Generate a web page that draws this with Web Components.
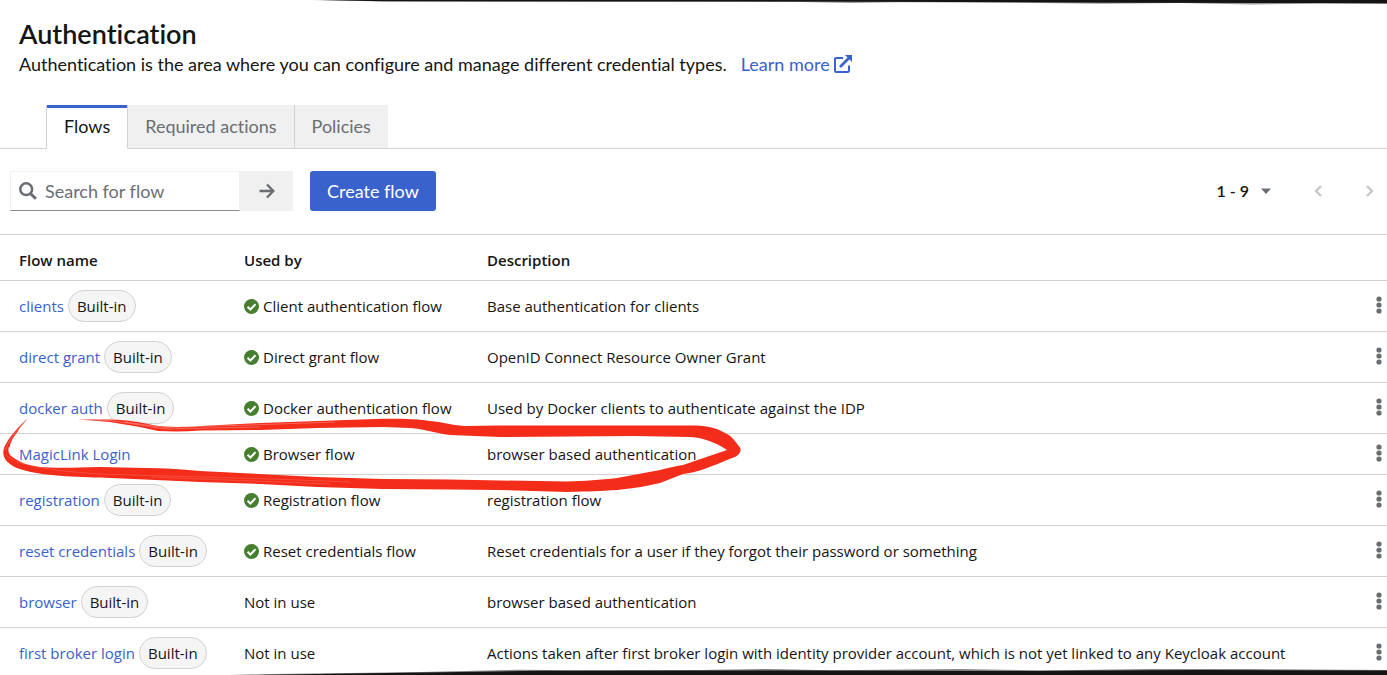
<!DOCTYPE html>
<html lang="en">
<head>
<meta charset="utf-8">
<title>Authentication</title>
<style>
  body { margin: 0; background: #fff; color: #151515; font-family: Lato, "Liberation Sans", sans-serif; font-size: 16px; line-height: 24px; font-variant-ligatures: none; }
</style>
</head>
<body>
<auth-page></auth-page>

<template id="t-auth-page">
  <style>
    :host { display: block; position: relative; height: 100vh; overflow: hidden; }
    torn-edge { position: absolute; left: 0; right: 0; }
    torn-edge[side="top"] { top: 0; }
    torn-edge[side="bottom"] { bottom: 0; }
  </style>
  <main>
    <page-heading>
      <span slot="title">Authentication</span>
      <span slot="text">Authentication is the area where you can configure and manage different credential types.</span>
    </page-heading>
    <flow-tabs></flow-tabs>
    <flow-toolbar></flow-toolbar>
    <flow-table></flow-table>
  </main>
  <torn-edge side="top"></torn-edge>
  <torn-edge side="bottom"></torn-edge>
</template>

<template id="t-page-heading">
  <style>
    :host { display: block; padding: 18px 19px 0; }
    h1 { margin: 0; font-size: 27px; line-height: 32px; font-weight: 600; }
    p { margin: 0; font-size: 18px; line-height: 28px; display: flex; flex-wrap: wrap; column-gap: 14px; }
    a { color: #3a62cc; text-decoration: none; display: inline-flex; align-items: center; gap: 4px; }
    svg { width: 18px; height: 18px; display: block; }
  </style>
  <h1><slot name="title"></slot></h1>
  <p><slot name="text"></slot>
    <a href="#learn">Learn more
      <svg viewBox="0 0 18 18" fill="none" stroke="currentColor" stroke-width="2"><path d="M9 3H2.200Q1 3 1 4.200V15.800Q1 17 2.200 17H13.800Q15 17 15 15.800V10.500"/><path d="M6 12L15 3" stroke-width="2.600"/><path d="M11 0H18V7Z" fill="currentColor" stroke="none"/></svg>
    </a>
  </p>
</template>

<template id="t-flow-tabs">
  <style>
    :host { display: block; margin-top: 27px; padding-left: 46px; box-shadow: inset 0 -1px #d2d2d2; }
    div { display: flex; }
    button { font: inherit; font-size: 18px; line-height: 24px; color: #6a6e73; background: #f0f0f0; border: 0; border-right: 1px solid #d2d2d2; border-bottom: 1px solid #d2d2d2; margin: 0; padding: 9px 17px 10px; height: 44px; }
    button:last-child { border-right: 0; }
    button[aria-selected="true"] { background: #fff; color: #151515; border-left: 1px solid #d2d2d2; border-bottom-color: #fff; box-shadow: inset 0 3px #3a62cc; }
  </style>
  <div role="tablist">
    <button role="tab" aria-selected="true">Flows</button>
    <button role="tab" aria-selected="false">Required actions</button>
    <button role="tab" aria-selected="false">Policies</button>
  </div>
</template>

<template id="t-flow-toolbar">
  <style>
    :host { display: flex; align-items: center; padding: 22px 0 23px 10px; }
    form { display: flex; margin-right: 17px; }
    label { display: flex; align-items: center; gap: 8px; box-sizing: border-box; width: 230px; height: 40px; padding-left: 8px; border: 1px solid #f0f0f0; border-bottom-color: #8a8d90; color: #6a6e73; }
    label svg { width: 18px; height: 18px; flex: none; }
    input { font: inherit; font-size: 18px; line-height: 24px; border: 0; padding: 0; margin: 0; min-width: 0; flex: 1; background: none; outline: 0; color: #151515; }
    input::placeholder { color: #6a6e73; opacity: 1; }
    button { font: inherit; border: 0; margin: 0; padding: 0; background: none; color: #6a6e73; display: flex; align-items: center; justify-content: center; }
    .go { width: 53px; height: 40px; background: #f0f0f0; }
    .create { height: 40px; padding: 0 17px; border-radius: 3px; background: #3a62cc; color: #fff; font-size: 18px; line-height: 24px; }
    .pager { margin-left: auto; display: flex; align-items: center; }
    .range { gap: 12px; color: #151515; font-size: 16px; font-weight: 600; margin-right: 43px; }
    .step { color: #c8c8c8; }
    .prev { margin-right: 44px; }
    .next { margin-right: 13px; }
  </style>
  <form role="search" onsubmit="return false">
    <label>
      <svg viewBox="0 0 18 18" fill="none" stroke="currentColor"><circle cx="7.200" cy="7.200" r="5.900" stroke-width="2.500"/><path d="M11.500 11.500L16.800 16.800" stroke-width="3"/></svg>
      <input type="text" placeholder="Search for flow" aria-label="Search for flow">
    </label>
    <button class="go" aria-label="Search"><svg width="16" height="16" viewBox="0 0 16 16" fill="none" stroke="currentColor" stroke-width="2.400"><path d="M.5 8H14M8 1.500L14.300 8L8 14.500"/></svg></button>
  </form>
  <button class="create">Create flow</button>
  <div class="pager">
    <button class="range">1 - 9 <svg width="10" height="6" viewBox="0 0 10 6"><path d="M0 .5H10L5 6Z" fill="#6a6e73"/></svg></button>
    <button class="step prev" aria-label="Previous"><svg width="8" height="12" viewBox="0 0 8 12" fill="none" stroke="currentColor" stroke-width="2.400"><path d="M7 1L2 6L7 11"/></svg></button>
    <button class="step next" aria-label="Next"><svg width="8" height="12" viewBox="0 0 8 12" fill="none" stroke="currentColor" stroke-width="2.400"><path d="M1 1L6 6L1 11"/></svg></button>
  </div>
</template>

<template id="t-flow-table">
  <style>
    :host { display: block; position: relative; border-top: 1px solid #d2d2d2; }
    table { width: 100%; border-collapse: collapse; table-layout: fixed; font-family: "Open Sans", "Liberation Sans", sans-serif; font-size: 15px; line-height: 24px; }
    th, td { padding: 0; text-align: left; font-weight: 400; border-bottom: 1px solid #d2d2d2; vertical-align: middle; white-space: nowrap; height: 40px; }
    th { height: 37px; padding-bottom: 8px; font-weight: 600; vertical-align: bottom; }
    tr.tall td { height: 50px; }
    th:first-child, td:first-child { padding-left: 19px; }
    .name { width: 225px; }
    .used { width: 243px; }
    .menu { width: 16px; }
    td > div { display: flex; align-items: center; gap: 4px; }
    a { color: #3a62cc; text-decoration: none; }
    red-marker { position: absolute; left: 0; top: 183px; pointer-events: none; }
  </style>
  <table>
    <thead><tr><th class="name">Flow name</th><th class="used">Used by</th><th>Description</th><th class="menu" aria-label="Actions"></th></tr></thead>
    <tbody></tbody>
  </table>
  <red-marker></red-marker>
</template>

<template id="t-built-in">
  <style>
    :host { display: block; box-sizing: border-box; height: 32px; padding: 3px 8px; border: 1px solid #d2d2d2; border-radius: 16px; background: #f5f5f5; }
  </style>
  <slot></slot>
</template>

<template id="t-used-by">
  <style>
    :host { display: flex; align-items: center; gap: 4px; }
    svg { width: 15px; height: 15px; flex: none; }
  </style>
  <svg viewBox="0 0 16 16" aria-hidden="true"><circle cx="8" cy="8" r="8" fill="#467f2f"/><path d="M3.800 8.300L6.800 11.200L12.300 5.500" fill="none" stroke="#fff" stroke-width="2.200"/></svg>
  <slot></slot>
</template>

<template id="t-row-menu">
  <style>
    :host { display: block; }
    button { display: flex; justify-content: center; width: 16px; margin: 0; padding: 0; border: 0; background: none; }
  </style>
  <button aria-label="Row actions"><svg width="6" height="20" viewBox="0 0 6 20" fill="#6a6e73"><circle cx="3" cy="3" r="2.600"/><circle cx="3" cy="9" r="2.600"/><circle cx="3" cy="15" r="2.600"/></svg></button>
</template>

<template id="t-red-marker">
  <style>:host { display: block; } svg { display: block; }</style>
  <svg width="744" height="78" viewBox="0 418 744 78" fill="#f42c1a" aria-hidden="true">
    <path d="M28 418C20 425 6 440 3.500 450C2 458 8 465 20 469C36 475 70 477 100 477.500L200 482L260 484L317 487L383 489L450 489.500L500 490L567 492C590 491.500 600 491 617 490C635 488 648 486 660 483L683 474C697 473 715 465 727 460L736 456.500Q743 451 739.500 447C735 441 732 436 725 433C715 427 705 425.500 690 425.500H500L465 426C450 425 443 422 430 421C420 419 400 418.500 383 418.700L317 421L250 423.500L200 426C180 427.500 165 427 155 425.500C140 422 130 420 110 419.500H78L110 422L140 427L158 431Q180 432 200 430.500L260 430L317 428L383 427L410 428C425 429 435 433 450 435L500 437L633 436L690 437C706 438 718 444 727 450L683 465C675 466 668 468 660 470L617 478C600 480 585 481 567 481.500L500 480.500L450 479.500L383 479L317 477L250 473.500L200 471C160 467 130 468 100 467C70 468 50 468 40 467C30 465 24 464 19 461C11 457 8 454 8.500 449C9 441 19 429 28 418Z"/>
    <path d="M9 447C10 440 13 436 18 430" fill="none" stroke="#f42c1a" stroke-width="1.500"/>
    <g fill="none" stroke="#fff" stroke-opacity=".45" stroke-width=".6">
      <path d="M80 420L112 420.500L165 429L260 427"/>
      <path d="M125 422L165 427.500L250 425L335 422"/>
      <path d="M6 455C16 466 55 471 100 474L270 479L350 482" stroke-opacity=".25"/>
      <path d="M5.500 450C8 441 16 432 25 421"/>
      <path d="M150 477L330 484" stroke-opacity=".25"/>
    </g>
  </svg>
</template>

<template id="t-torn-edge">
  <style>
    :host { display: block; pointer-events: none; }
    svg { display: none; width: 100%; height: 8px; }
    :host([side="top"]) .top, :host([side="bottom"]) .bottom { display: block; }
  </style>
  <svg class="top" viewBox="0 0 1387 8" preserveAspectRatio="none"><path d="M310 0L390 1.500L700 1.700L800 2L850 3L900 2.200L1040 3L1100 3.800L1180 3L1250 4.500L1320 3.500L1387 4V0Z" fill="#999"/><path d="M320 0L380 1.300L700 1.500L960 2L1120 2.800L1387 3.300V0Z" fill="#151315"/></svg>
  <svg class="bottom" viewBox="0 0 1387 8" preserveAspectRatio="none"><path d="M230 8L270 7L350 6L420 5L520 2.800L570 3.200L700 3L770 2L830 3.300L960 2L1040 3.500L1150 2L1250 2L1387 3V8Z" fill="#888"/><path d="M255 8L350 6.500L480 4.800L540 3.700L800 3.400L1000 4L1200 3L1387 3.400V8Z" fill="#151315"/></svg>
</template>

<script>
  const define = (name, setup) => customElements.define(name, class extends HTMLElement {
    constructor() {
      super();
      const root = this.attachShadow({ mode: "open" });
      root.append(document.getElementById("t-" + name).content.cloneNode(true));
      if (setup) setup(root);
    }
  });

  const flows = [
    ["clients", true, "Client authentication flow", "Base authentication for clients"],
    ["direct grant", true, "Direct grant flow", "OpenID Connect Resource Owner Grant"],
    ["docker auth", true, "Docker authentication flow", "Used by Docker clients to authenticate against the IDP"],
    ["MagicLink Login", false, "Browser flow", "browser based authentication"],
    ["registration", true, "Registration flow", "registration flow"],
    ["reset credentials", true, "Reset credentials flow", "Reset credentials for a user if they forgot their password or something"],
    ["browser", true, "", "browser based authentication"],
    ["first broker login", true, "", "Actions taken after first broker login with identity provider account, which is not yet linked to any Keycloak account"]
  ];

  ["page-heading", "flow-tabs", "flow-toolbar", "built-in", "used-by", "row-menu", "red-marker", "torn-edge"].forEach(n => define(n));
  define("flow-table", root => {
    root.querySelector("tbody").innerHTML = flows.map(([name, builtIn, used, text]) => `
      <tr class="${builtIn ? "tall" : ""}">
        <td><div><a href="#flow">${name}</a>${builtIn ? "<built-in>Built-in</built-in>" : ""}</div></td>
        <td>${used ? `<used-by>${used}</used-by>` : "Not in use"}</td>
        <td>${text}</td>
        <td><row-menu></row-menu></td>
      </tr>`).join("");
  });
  define("auth-page");
</script>
</body>
</html>
